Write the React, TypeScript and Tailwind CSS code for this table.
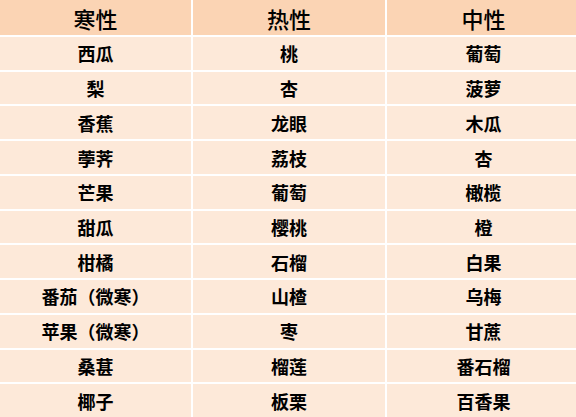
import React from "react";

const rows: [string, string, string][] = [
  ["西瓜", "桃", "葡萄"],
  ["梨", "杏", "菠萝"],
  ["香蕉", "龙眼", "木瓜"],
  ["荸荠", "荔枝", "杏"],
  ["芒果", "葡萄", "橄榄"],
  ["甜瓜", "樱桃", "橙"],
  ["柑橘", "石榴", "白果"],
  ["番茄（微寒）", "山楂", "乌梅"],
  ["苹果（微寒）", "枣", "甘蔗"],
  ["桑葚", "榴莲", "番石榴"],
  ["椰子", "板栗", "百香果"],
];

export default function App() {
  return (
    <div
      className="w-[576px] h-[417px] bg-white grid grid-cols-[191px_192px_193px] grid-rows-[35px_repeat(11,1fr)] gap-[2px] text-black"
      style={{ fontFamily: '"Noto Sans CJK SC", "Noto Sans", sans-serif' }}
    >
      {["寒性", "热性", "中性"].map((h) => (
        <div key={h} className="bg-[#fbd4b4] flex items-center justify-center text-[22px] font-medium leading-none">
          {h}
        </div>
      ))}
      {rows.map((r, i) =>
        r.map((c, j) => (
          <div key={`${i}-${j}`} className="bg-[#fde9d9] flex items-center justify-center text-[18px] font-bold leading-none">
            {c}
          </div>
        ))
      )}
    </div>
  );
}
